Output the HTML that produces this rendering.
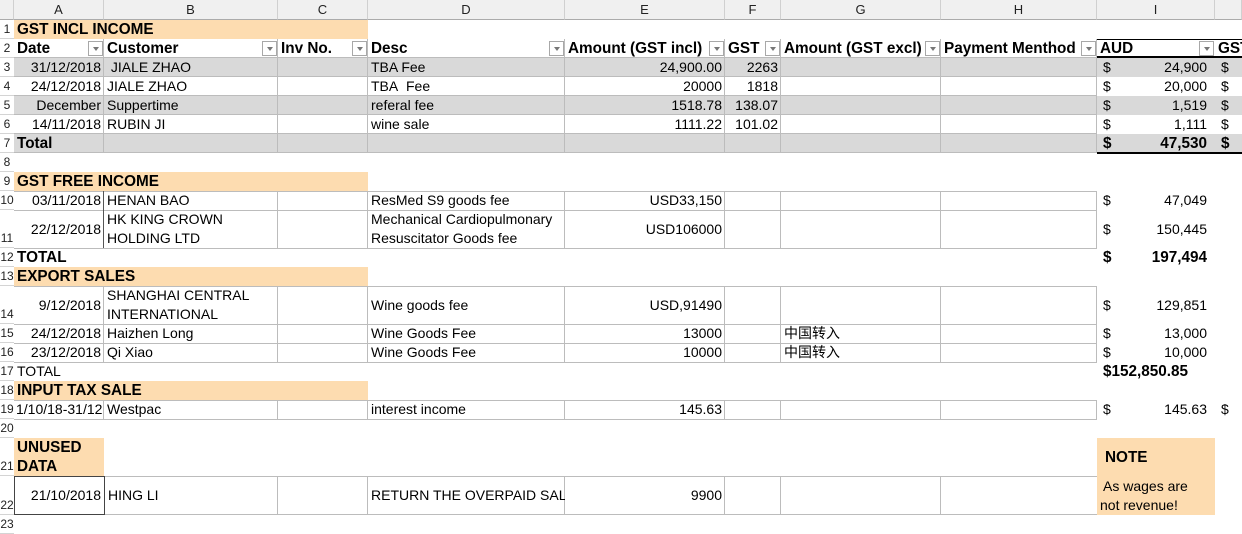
<!DOCTYPE html>
<html><head><meta charset="utf-8"><style>
*{margin:0;padding:0;box-sizing:border-box}
body{width:1242px;height:527px;overflow:hidden;background:#fff;position:relative;font-family:"Liberation Sans","Noto Sans CJK SC",sans-serif;font-size:14px;color:#000}
.c{position:absolute;display:flex;align-items:center;padding:0 3px;white-space:nowrap;overflow:hidden;line-height:19px}
.r{justify-content:flex-end}
.b{font-weight:bold;font-size:15.3px}
.g{background:#d9d9d9}
.p{background:#fddcb0}
.bd{border-right:1px solid #bcbcbc;border-bottom:1px solid #bcbcbc}
.rh{position:absolute;left:0;width:14px;font-size:12px;color:#222;display:flex;align-items:flex-end;justify-content:center;line-height:17px;overflow:hidden;border-bottom:1px solid #d4d4d4}
.ch{position:absolute;top:0;height:20px;background:#f0f0f0;border-right:1px solid #d0d0d0;border-bottom:1px solid #ababab;font-size:13px;display:flex;align-items:center;justify-content:center;color:#222}
.f{position:absolute;width:15px;height:15px;border:1px solid #a8a8a8;background:#fff}
.f:after{content:"";position:absolute;left:4px;top:5px;border-left:3px solid transparent;border-right:3px solid transparent;border-top:4px solid #777}
.hl{position:absolute;height:1px;background:#bcbcbc}
.vl{position:absolute;width:1px;background:#bcbcbc}
</style></head><body>
<div class="ch" style="left:0;width:14px;background:#f0f0f0"></div>
<div class="ch" style="left:14px;width:90px">A</div>
<div class="ch" style="left:104px;width:174px">B</div>
<div class="ch" style="left:278px;width:90px">C</div>
<div class="ch" style="left:368px;width:197px">D</div>
<div class="ch" style="left:565px;width:160px">E</div>
<div class="ch" style="left:725px;width:56px">F</div>
<div class="ch" style="left:781px;width:160px">G</div>
<div class="ch" style="left:941px;width:156px">H</div>
<div class="ch" style="left:1097px;width:118px">I</div>
<div class="ch" style="left:1215px;width:27px"></div>
<div class="rh" style="top:20px;height:19px">1</div>
<div class="rh" style="top:39px;height:19px">2</div>
<div class="rh" style="top:58px;height:19px">3</div>
<div class="rh" style="top:77px;height:19px">4</div>
<div class="rh" style="top:96px;height:19px">5</div>
<div class="rh" style="top:115px;height:19px">6</div>
<div class="rh" style="top:134px;height:19px">7</div>
<div class="rh" style="top:153px;height:19px">8</div>
<div class="rh" style="top:172px;height:19px">9</div>
<div class="rh" style="top:191px;height:19px">10</div>
<div class="rh" style="top:210px;height:38px">11</div>
<div class="rh" style="top:248px;height:19px">12</div>
<div class="rh" style="top:267px;height:19px">13</div>
<div class="rh" style="top:286px;height:38px">14</div>
<div class="rh" style="top:324px;height:19px">15</div>
<div class="rh" style="top:343px;height:19px">16</div>
<div class="rh" style="top:362px;height:19px">17</div>
<div class="rh" style="top:381px;height:19px">18</div>
<div class="rh" style="top:400px;height:19px">19</div>
<div class="rh" style="top:419px;height:19px">20</div>
<div class="rh" style="top:438px;height:38px">21</div>
<div class="rh" style="top:476px;height:39px">22</div>
<div class="rh" style="top:515px;height:19px">23</div>

<div class="c p b" style="left:14px;top:20px;width:354px;height:19px">GST INCL INCOME</div>
<div class="c b bd" style="left:14px;top:39px;width:90px;height:19px">Date</div>
<div class="c b bd" style="left:104px;top:39px;width:174px;height:19px">Customer</div>
<div class="c b bd" style="left:278px;top:39px;width:90px;height:19px">Inv No.</div>
<div class="c b bd" style="left:368px;top:39px;width:197px;height:19px">Desc</div>
<div class="c b bd" style="left:565px;top:39px;width:160px;height:19px">Amount (GST incl)</div>
<div class="c b bd" style="left:725px;top:39px;width:56px;height:19px">GST</div>
<div class="c b bd" style="left:781px;top:39px;width:160px;height:19px">Amount (GST excl)</div>
<div class="c b bd" style="left:941px;top:39px;width:156px;height:19px">Payment Menthod</div>
<div class="c b" style="left:1097px;top:39px;width:118px;height:19px;border-top:1px solid #000;border-bottom:2px solid #000">AUD</div>
<div class="c b" style="left:1215px;top:39px;width:27px;height:19px;border-top:1px solid #000;border-bottom:2px solid #000">GST</div>
<div class="f" style="left:88px;top:41px"></div>
<div class="f" style="left:262px;top:41px"></div>
<div class="f" style="left:352px;top:41px"></div>
<div class="f" style="left:549px;top:41px"></div>
<div class="f" style="left:709px;top:41px"></div>
<div class="f" style="left:765px;top:41px"></div>
<div class="f" style="left:925px;top:41px"></div>
<div class="f" style="left:1081px;top:41px"></div>
<div class="f" style="left:1199px;top:41px"></div>

<div class="g" style="position:absolute;left:14px;top:58px;width:1228px;height:19px"></div>
<div class="g" style="position:absolute;left:14px;top:96px;width:1228px;height:19px"></div>
<div class="g" style="position:absolute;left:14px;top:134px;width:1228px;height:19px"></div>
<div class="hl" style="left:14px;top:76px;width:1083px"></div>
<div class="hl" style="left:14px;top:95px;width:1083px"></div>
<div class="hl" style="left:14px;top:114px;width:1083px"></div>
<div class="hl" style="left:14px;top:133px;width:1083px"></div>
<div class="hl" style="left:14px;top:152px;width:1083px"></div>
<div class="vl" style="left:103px;top:58px;height:95px"></div>
<div class="vl" style="left:277px;top:58px;height:95px"></div>
<div class="vl" style="left:367px;top:58px;height:95px"></div>
<div class="vl" style="left:564px;top:58px;height:95px"></div>
<div class="vl" style="left:724px;top:58px;height:95px"></div>
<div class="vl" style="left:780px;top:58px;height:95px"></div>
<div class="vl" style="left:940px;top:58px;height:95px"></div>
<div class="vl" style="left:1096px;top:58px;height:95px"></div>
<div style="position:absolute;left:1097px;top:152px;width:145px;height:2px;background:#000"></div>

<div class="c r" style="left:14px;top:58px;width:90px;height:19px">31/12/2018</div>
<div class="c" style="left:104px;top:58px;width:174px;height:19px">&nbsp;JIALE ZHAO</div>
<div class="c" style="left:368px;top:58px;width:197px;height:19px">TBA Fee</div>
<div class="c r" style="left:565px;top:58px;width:160px;height:19px">24,900.00</div>
<div class="c r" style="left:725px;top:58px;width:56px;height:19px">2263</div>

<div class="c r" style="left:14px;top:77px;width:90px;height:19px">24/12/2018</div>
<div class="c" style="left:104px;top:77px;width:174px;height:19px">JIALE ZHAO</div>
<div class="c" style="left:368px;top:77px;width:197px;height:19px">TBA&nbsp; Fee</div>
<div class="c r" style="left:565px;top:77px;width:160px;height:19px">20000</div>
<div class="c r" style="left:725px;top:77px;width:56px;height:19px">1818</div>

<div class="c r" style="left:14px;top:96px;width:90px;height:19px">December</div>
<div class="c" style="left:104px;top:96px;width:174px;height:19px">Suppertime</div>
<div class="c" style="left:368px;top:96px;width:197px;height:19px">referal fee</div>
<div class="c r" style="left:565px;top:96px;width:160px;height:19px">1518.78</div>
<div class="c r" style="left:725px;top:96px;width:56px;height:19px">138.07</div>

<div class="c r" style="left:14px;top:115px;width:90px;height:19px">14/11/2018</div>
<div class="c" style="left:104px;top:115px;width:174px;height:19px">RUBIN JI</div>
<div class="c" style="left:368px;top:115px;width:197px;height:19px">wine sale</div>
<div class="c r" style="left:565px;top:115px;width:160px;height:19px">1111.22</div>
<div class="c r" style="left:725px;top:115px;width:56px;height:19px">101.02</div>

<div class="c b" style="left:14px;top:134px;width:90px;height:19px">Total</div>

<div class="c" style="left:1100px;top:58px;width:20px;height:19px">$</div><div class="c r" style="left:1110px;top:58px;width:100px;height:19px">24,900</div><div class="c" style="left:1218px;top:58px;width:20px;height:19px">$</div>
<div class="c" style="left:1100px;top:77px;width:20px;height:19px">$</div><div class="c r" style="left:1110px;top:77px;width:100px;height:19px">20,000</div><div class="c" style="left:1218px;top:77px;width:20px;height:19px">$</div>
<div class="c" style="left:1100px;top:96px;width:20px;height:19px">$</div><div class="c r" style="left:1110px;top:96px;width:100px;height:19px">1,519</div><div class="c" style="left:1218px;top:96px;width:20px;height:19px">$</div>
<div class="c" style="left:1100px;top:115px;width:20px;height:19px">$</div><div class="c r" style="left:1110px;top:115px;width:100px;height:19px">1,111</div><div class="c" style="left:1218px;top:115px;width:20px;height:19px">$</div>
<div class="c b" style="left:1100px;top:134px;width:20px;height:19px">$</div><div class="c r b" style="left:1110px;top:134px;width:100px;height:19px">47,530</div><div class="c b" style="left:1218px;top:134px;width:20px;height:19px">$</div>

<div class="c p b" style="left:14px;top:172px;width:354px;height:19px">GST FREE INCOME</div>
<div class="hl" style="left:14px;top:191px;width:1083px"></div>
<div class="hl" style="left:14px;top:210px;width:1083px"></div>
<div class="hl" style="left:14px;top:248px;width:1083px"></div>
<div class="vl" style="left:103px;top:191px;height:57px;background:#555"></div>
<div class="vl" style="left:277px;top:191px;height:57px"></div>
<div class="vl" style="left:367px;top:191px;height:57px"></div>
<div class="vl" style="left:564px;top:191px;height:57px"></div>
<div class="vl" style="left:724px;top:191px;height:57px"></div>
<div class="vl" style="left:780px;top:191px;height:57px"></div>
<div class="vl" style="left:940px;top:191px;height:57px"></div>
<div class="vl" style="left:1096px;top:191px;height:57px"></div>

<div class="c r" style="left:14px;top:191px;width:90px;height:19px">03/11/2018</div>
<div class="c" style="left:104px;top:191px;width:174px;height:19px">HENAN BAO</div>
<div class="c" style="left:368px;top:191px;width:197px;height:19px">ResMed S9 goods fee</div>
<div class="c r" style="left:565px;top:191px;width:160px;height:19px">USD33,150</div>
<div class="c" style="left:1100px;top:191px;width:20px;height:19px">$</div><div class="c r" style="left:1110px;top:191px;width:100px;height:19px">47,049</div>

<div class="c r" style="left:14px;top:210px;width:90px;height:38px">22/12/2018</div>
<div class="c" style="left:104px;top:210px;width:174px;height:38px">HK KING CROWN<br>HOLDING LTD</div>
<div class="c" style="left:368px;top:210px;width:197px;height:38px">Mechanical Cardiopulmonary<br>Resuscitator Goods fee</div>
<div class="c r" style="left:565px;top:210px;width:160px;height:38px">USD106000</div>
<div class="c" style="left:1100px;top:210px;width:20px;height:38px">$</div><div class="c r" style="left:1110px;top:210px;width:100px;height:38px">150,445</div>

<div class="c b" style="left:14px;top:248px;width:90px;height:19px">TOTAL</div>
<div class="c b" style="left:1100px;top:248px;width:20px;height:19px">$</div><div class="c r b" style="left:1110px;top:248px;width:100px;height:19px">197,494</div>

<div class="c p b" style="left:14px;top:267px;width:354px;height:19px">EXPORT SALES</div>
<div class="hl" style="left:14px;top:286px;width:1083px"></div>
<div class="hl" style="left:14px;top:324px;width:1083px"></div>
<div class="hl" style="left:14px;top:343px;width:1083px"></div>
<div class="hl" style="left:14px;top:362px;width:1083px"></div>
<div class="vl" style="left:103px;top:286px;height:76px"></div>
<div class="vl" style="left:277px;top:286px;height:76px"></div>
<div class="vl" style="left:367px;top:286px;height:76px"></div>
<div class="vl" style="left:564px;top:286px;height:76px"></div>
<div class="vl" style="left:724px;top:286px;height:76px"></div>
<div class="vl" style="left:780px;top:286px;height:76px"></div>
<div class="vl" style="left:940px;top:286px;height:76px"></div>
<div class="vl" style="left:1096px;top:286px;height:76px"></div>

<div class="c r" style="left:14px;top:286px;width:90px;height:38px">9/12/2018</div>
<div class="c" style="left:104px;top:286px;width:174px;height:38px">SHANGHAI CENTRAL<br>INTERNATIONAL</div>
<div class="c" style="left:368px;top:286px;width:197px;height:38px">Wine goods fee</div>
<div class="c r" style="left:565px;top:286px;width:160px;height:38px">USD,91490</div>
<div class="c" style="left:1100px;top:286px;width:20px;height:38px">$</div><div class="c r" style="left:1110px;top:286px;width:100px;height:38px">129,851</div>

<div class="c r" style="left:14px;top:324px;width:90px;height:19px">24/12/2018</div>
<div class="c" style="left:104px;top:324px;width:174px;height:19px">Haizhen Long</div>
<div class="c" style="left:368px;top:324px;width:197px;height:19px">Wine Goods Fee</div>
<div class="c r" style="left:565px;top:324px;width:160px;height:19px">13000</div>
<div class="c" style="left:781px;top:324px;width:160px;height:19px">中国转入</div>
<div class="c" style="left:1100px;top:324px;width:20px;height:19px">$</div><div class="c r" style="left:1110px;top:324px;width:100px;height:19px">13,000</div>

<div class="c r" style="left:14px;top:343px;width:90px;height:19px">23/12/2018</div>
<div class="c" style="left:104px;top:343px;width:174px;height:19px">Qi Xiao</div>
<div class="c" style="left:368px;top:343px;width:197px;height:19px">Wine Goods Fee</div>
<div class="c r" style="left:565px;top:343px;width:160px;height:19px">10000</div>
<div class="c" style="left:781px;top:343px;width:160px;height:19px">中国转入</div>
<div class="c" style="left:1100px;top:343px;width:20px;height:19px">$</div><div class="c r" style="left:1110px;top:343px;width:100px;height:19px">10,000</div>

<div class="c" style="left:14px;top:362px;width:90px;height:19px">TOTAL</div>
<div class="c b" style="left:1100px;top:362px;width:140px;height:19px;padding-left:3px">$152,850.85</div>

<div class="c p b" style="left:14px;top:381px;width:354px;height:19px">INPUT TAX SALE</div>
<div class="hl" style="left:14px;top:400px;width:1083px"></div>
<div class="hl" style="left:14px;top:419px;width:1083px"></div>
<div class="vl" style="left:103px;top:400px;height:19px"></div>
<div class="vl" style="left:277px;top:400px;height:19px"></div>
<div class="vl" style="left:367px;top:400px;height:19px"></div>
<div class="vl" style="left:564px;top:400px;height:19px"></div>
<div class="vl" style="left:724px;top:400px;height:19px"></div>
<div class="vl" style="left:780px;top:400px;height:19px"></div>
<div class="vl" style="left:940px;top:400px;height:19px"></div>
<div class="vl" style="left:1096px;top:400px;height:19px"></div>
<div class="c" style="left:14px;top:400px;width:90px;height:19px;padding:0 2px">1/10/18-31/12</div>
<div class="c" style="left:104px;top:400px;width:174px;height:19px">Westpac</div>
<div class="c" style="left:368px;top:400px;width:197px;height:19px">interest income</div>
<div class="c r" style="left:565px;top:400px;width:160px;height:19px">145.63</div>
<div class="c" style="left:1100px;top:400px;width:20px;height:19px">$</div><div class="c r" style="left:1110px;top:400px;width:100px;height:19px">145.63</div><div class="c" style="left:1218px;top:400px;width:20px;height:19px">$</div>

<div class="c p b" style="left:14px;top:438px;width:90px;height:38px;align-items:flex-end">UNUSED<br>DATA</div>
<div class="c p" style="left:1097px;top:438px;width:118px;height:77px;display:block;padding:0 3px">
<div class="b" style="margin-top:10px;padding-left:5px">NOTE</div>
<div style="margin-top:10px;padding-left:3px">As wages are</div>
<div>not revenue!</div>
</div>
<div class="hl" style="left:14px;top:476px;width:1083px"></div>
<div class="hl" style="left:14px;top:514px;width:1083px"></div>
<div class="vl" style="left:277px;top:476px;height:39px"></div>
<div class="vl" style="left:367px;top:476px;height:39px"></div>
<div class="vl" style="left:564px;top:476px;height:39px"></div>
<div class="vl" style="left:724px;top:476px;height:39px"></div>
<div class="vl" style="left:780px;top:476px;height:39px"></div>
<div class="vl" style="left:940px;top:476px;height:39px"></div>
<div class="c r" style="left:14px;top:476px;width:91px;height:39px;border:1px solid #444">21/10/2018</div>
<div class="c" style="left:105px;top:476px;width:173px;height:39px">HING LI</div>
<div class="c" style="left:368px;top:476px;width:197px;height:39px">RETURN THE OVERPAID SALARY</div>
<div class="c r" style="left:565px;top:476px;width:160px;height:39px">9900</div>
</body></html>
